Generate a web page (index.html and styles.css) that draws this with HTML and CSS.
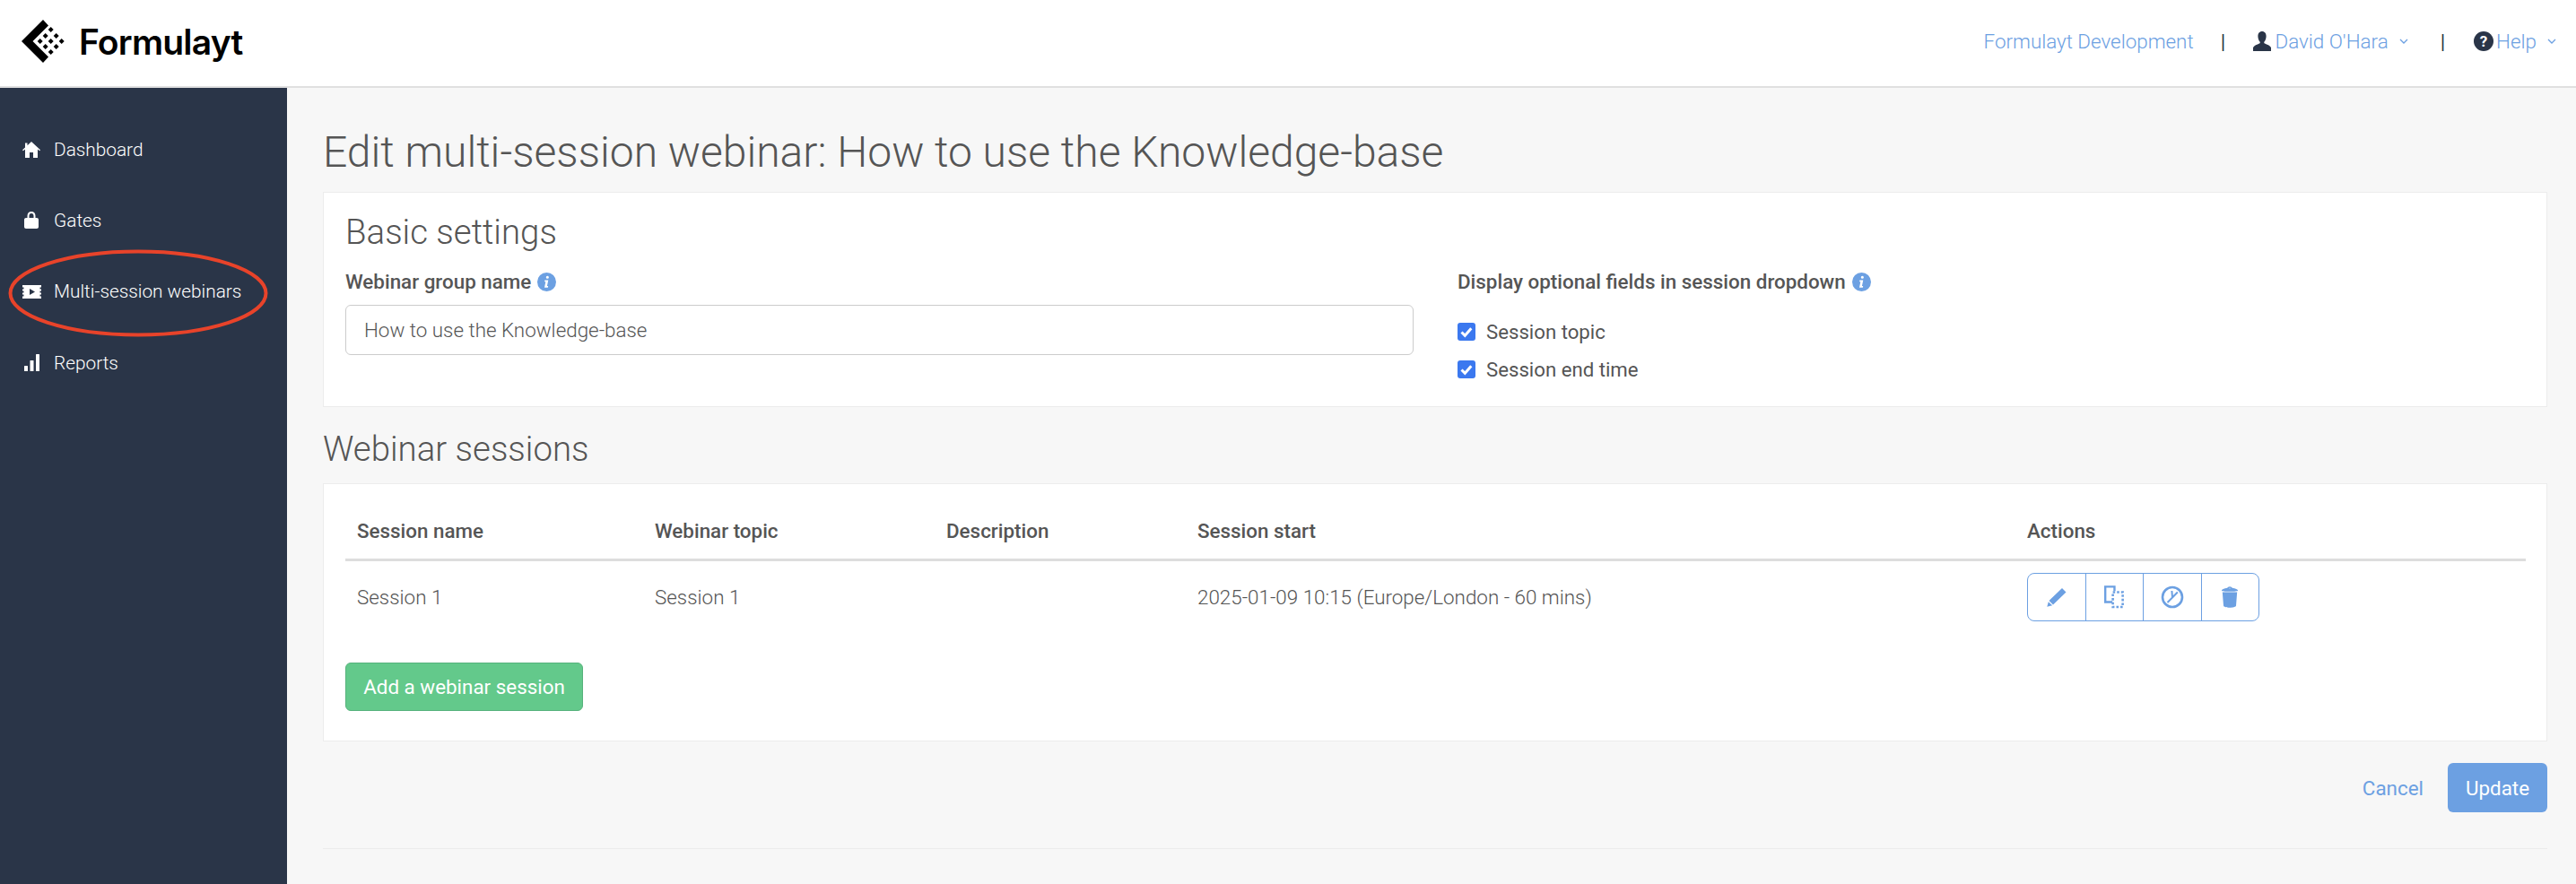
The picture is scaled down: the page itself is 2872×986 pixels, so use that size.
FILE: index.html
```html
<!DOCTYPE html>
<html lang="en">
<head>
<meta charset="utf-8">
<title>Edit multi-session webinar</title>
<link rel="stylesheet" href="styles.css">
</head>
<body>
<header class="topbar">
  <a class="brand" href="#">
    <svg class="brand-mark" viewBox="0 0 50 50" width="50" height="50" aria-hidden="true">
      <polygon fill="#000" points="0,24 24,0 30,6.500 12.500,24 30,41.500 24,48"/>
      <g fill="#000">
        <polygon points="32.700,8 35.700,11 32.700,14 29.700,11"/>
        <polygon points="26.700,15 29.700,18 26.700,21 23.700,18"/>
        <polygon points="38.700,15 41.700,18 38.700,21 35.700,18"/>
        <polygon points="20.700,21 23.700,24 20.700,27 17.700,24"/>
        <polygon points="32.700,21 35.700,24 32.700,27 29.700,24"/>
        <polygon points="44.700,21 47.700,24 44.700,27 41.700,24"/>
        <polygon points="26.700,27 29.700,30 26.700,33 23.700,30"/>
        <polygon points="38.700,27 41.700,30 38.700,33 35.700,30"/>
        <polygon points="32.700,33 35.700,36 32.700,39 29.700,36"/>
      </g>
    </svg>
    <span class="brand-name">Formulayt</span>
  </a>
  <nav class="topnav">
    <a class="toplink" href="#">Formulayt Development</a>
    <span class="sep">|</span>
    <a class="toplink with-icon" href="#">
      <svg class="user-icon" viewBox="0 0 20 22" width="20" height="22" aria-hidden="true"><path fill="#2a3548" d="M10 0c3 0 4.600 2.400 4.600 5.400 0 2.600-1 4.700-2.100 6.100-.5.700-.3 1.700.5 2.100 2.700 1.200 5.700 2.300 7 4.400V22H0v-4c1.300-2.100 4.300-3.200 7-4.400.8-.4 1-1.400.5-2.100C6.400 10.100 5.400 8 5.400 5.400 5.400 2.400 7 0 10 0z"/></svg>
      <span>David O'Hara</span>
      <svg class="chev" viewBox="0 0 10 6" width="10" height="6" aria-hidden="true"><path d="M1 1l4 4 4-4" fill="none" stroke="#6ca0e2" stroke-width="1.300"/></svg>
    </a>
    <span class="sep sep-two">|</span>
    <a class="toplink with-icon" href="#">
      <svg class="help-icon" viewBox="0 0 22 22" width="22" height="22" aria-hidden="true"><circle cx="11" cy="11" r="11" fill="#2a3548"/><text x="11" y="17" text-anchor="middle" class="help-q">?</text></svg>
      <span>Help</span>
      <svg class="chev" viewBox="0 0 10 6" width="10" height="6" aria-hidden="true"><path d="M1 1l4 4 4-4" fill="none" stroke="#6ca0e2" stroke-width="1.300"/></svg>
    </a>
  </nav>
</header>

<div class="layout">
  <aside class="sidebar">
    <a class="nav-item" href="#">
      <span class="nav-icon"><svg viewBox="0 0 20 18" width="20" height="18" aria-hidden="true"><path fill="#fff" d="M10 0l10 9.200-.9 1L17 8.400V18h-5v-6H8v6H3V8.400l-2.100 1.800-.9-1L3 6.500V1.500h2.500v2.700z"/></svg></span>
      Dashboard
    </a>
    <a class="nav-item" href="#">
      <span class="nav-icon"><svg viewBox="0 0 16 19" width="16" height="19" aria-hidden="true"><path fill="#fff" d="M8 0c2.800 0 4.500 2 4.500 4.700V7H14c1.100 0 2 .9 2 2v8c0 1.100-.9 2-2 2H2c-1.100 0-2-.9-2-2V9c0-1.100.9-2 2-2h1.500V4.700C3.500 2 5.200 0 8 0zm0 2C6.300 2 5.500 3.200 5.500 4.700V7h5V4.700C10.500 3.200 9.700 2 8 2z"/></svg></span>
      Gates
    </a>
    <a class="nav-item" href="#">
      <span class="nav-icon"><svg viewBox="0 0 21 15" width="21" height="15" aria-hidden="true"><path fill="#fff" fill-rule="evenodd" d="M0 0h21v2.500h-1.500v2H21v2h-1.500v2H21v2h-1.500v2H21V15H0v-2.500h1.500v-2H0v-2h1.500v-2H0v-2h1.500v-2H0zM8 4v7l6-3.500z"/></svg></span>
      Multi-session webinars
    </a>
    <a class="nav-item" href="#">
      <span class="nav-icon"><svg viewBox="0 0 17 19" width="17" height="19" aria-hidden="true"><g fill="#fff"><rect x="0" y="13" width="4" height="6" rx=".5"/><rect x="6.500" y="7" width="4" height="12" rx=".5"/><rect x="13" y="0" width="4" height="19" rx=".5"/></g></svg></span>
      Reports
    </a>
    <svg class="highlight" viewBox="0 0 290 98" width="290" height="98" aria-hidden="true"><ellipse cx="145" cy="49" rx="142.500" ry="46.500" fill="none" stroke="#e8432a" stroke-width="4"/></svg>
  </aside>

  <main class="main">
    <h1 class="page-title">Edit multi-session webinar: How to use the Knowledge-base</h1>

    <section class="card card-basic">
      <h2 class="card-title">Basic settings</h2>
      <div class="form-cols">
        <div class="col-left">
          <label class="field-label">Webinar group name <svg class="info" viewBox="0 0 20 20" width="21" height="21" aria-hidden="true"><circle cx="10" cy="10" r="10" fill="#6ca0e2"/><path fill="#fff" d="M10.800 3.500a1.500 1.500 0 1 1 0 3 1.500 1.500 0 0 1 0-3zM8 8h3.700l-1.300 6.200h1.200l-.3 1.800H7.600l1.300-6.200H7.700z"/></svg></label>
          <div class="text-input">How to use the Knowledge-base</div>
        </div>
        <div class="col-right">
          <label class="field-label">Display optional fields in session dropdown <svg class="info" viewBox="0 0 20 20" width="21" height="21" aria-hidden="true"><circle cx="10" cy="10" r="10" fill="#6ca0e2"/><path fill="#fff" d="M10.800 3.500a1.500 1.500 0 1 1 0 3 1.500 1.500 0 0 1 0-3zM8 8h3.700l-1.300 6.200h1.200l-.3 1.800H7.600l1.300-6.200H7.700z"/></svg></label>
          <div class="check-row first"><span class="checkbox"><svg viewBox="0 0 20 20" width="20" height="20" aria-hidden="true"><path d="M4.500 10.500l3.800 3.800 7-8" fill="none" stroke="#fff" stroke-width="3"/></svg></span>Session topic</div>
          <div class="check-row"><span class="checkbox"><svg viewBox="0 0 20 20" width="20" height="20" aria-hidden="true"><path d="M4.500 10.500l3.800 3.800 7-8" fill="none" stroke="#fff" stroke-width="3"/></svg></span>Session end time</div>
        </div>
      </div>
    </section>

    <h2 class="section-title">Webinar sessions</h2>

    <section class="card card-sessions">
      <table class="sessions">
        <thead>
          <tr>
            <th class="c1">Session name</th>
            <th class="c2">Webinar topic</th>
            <th class="c3">Description</th>
            <th class="c4">Session start</th>
            <th class="c5">Actions</th>
          </tr>
        </thead>
        <tbody>
          <tr>
            <td>Session 1</td>
            <td>Session 1</td>
            <td></td>
            <td>2025-01-09 10:15 (Europe/London - 60 mins)</td>
            <td>
              <div class="btn-group">
                <a class="icon-btn" href="#"><svg viewBox="0 0 24 24" width="24" height="24" aria-hidden="true"><path fill="#6ca0e2" d="M18 2l4.500 4.500L8 20.500l-4.500-4.500zM2.800 17.200l4.300 4.100-5.800 1.500z"/></svg></a>
                <a class="icon-btn" href="#"><svg viewBox="0 0 24 28" width="22" height="26" aria-hidden="true"><path fill="none" stroke="#6ca0e2" stroke-width="2.600" d="M10 20H1.300V1.300H12.500V6.500"/><path fill="none" stroke="#6ca0e2" stroke-width="2.800" stroke-dasharray="2.800 2.200" d="M10.500 8h12v18h-12z"/></svg></a>
                <a class="icon-btn" href="#"><svg viewBox="0 0 26 26" width="26" height="26" aria-hidden="true"><circle cx="13" cy="13" r="11" fill="none" stroke="#6ca0e2" stroke-width="2.600"/><path fill="none" stroke="#6ca0e2" stroke-width="2" d="M7.500 19l5.500-5.500M13 13.500L12.400 6M13 13.500L18.800 7.500"/></svg></a>
                <a class="icon-btn" href="#"><svg viewBox="0 0 22 26" width="20" height="26" aria-hidden="true"><path fill="#6ca0e2" d="M2 7h18l-1.300 16.500c-.1 1.400-3.500 2.500-7.700 2.500s-7.600-1.100-7.700-2.500zM11 0c1.400 0 2.700.8 3 1.800C18 2.500 21 3.700 21 5c0 .6-4.500 1.200-10 1.200S1 5.600 1 5c0-1.300 3-2.500 7-3.200C8.300.8 9.600 0 11 0zm0 1.600c-.7 0-1.300.3-1.500.6l3 0c-.2-.3-.8-.6-1.500-.6z"/></svg></a>
              </div>
            </td>
          </tr>
        </tbody>
      </table>
      <a class="btn btn-add" href="#">Add a webinar session</a>
    </section>

    <div class="form-actions">
      <a class="cancel" href="#">Cancel</a>
      <a class="btn btn-update" href="#">Update</a>
    </div>
    <hr class="divider">
  </main>
</div>
</body>
</html>
```

FILE: styles.css
```css
* { box-sizing: border-box; }
html, body { margin: 0; padding: 0; height: 100%; }
body {
  font-family: Roboto, "Liberation Sans", sans-serif;
  font-size: 22.400px;
  color: #555;
  background: #f7f7f7;
  overflow: hidden;
  display: flex;
  flex-direction: column;
}
a { text-decoration: none; color: inherit; }

.topbar {
  height: 98px;
  flex: none;
  background: #fff;
  border-bottom: 2px solid #e0e0e0;
  display: flex;
  align-items: flex-start;
  justify-content: space-between;
  padding-left: 24px;
}
.brand { display: flex; align-items: center; margin-top: 22px; }
.brand-mark { display: block; }
.brand-name {
  font-family: Inter, "Liberation Sans", sans-serif;
  font-weight: 600;
  font-size: 39px;
  line-height: 48px;
  letter-spacing: -0.8px;
  color: #000;
  margin-left: 14px;
}
.topnav {
  display: flex;
  align-items: center;
  height: 92px;
  padding-right: 22px;
  font-weight: 300;
  color: #6ca0e2;
}
.toplink { display: flex; align-items: center; color: #6ca0e2; }
.with-icon .user-icon { margin-right: 4px; }
.with-icon .help-icon { margin-right: 3.500px; }
.help-q { font: 700 17px Roboto, sans-serif; fill: #fff; }
.chev { margin-left: 12px; }
.sep { color: #2a3548; margin: 0 31.400px 0 30px; font-weight: 400; }
.sep-two { margin: 0 31.500px 0 36px; }

.layout { flex: 1; display: flex; min-height: 0; }
.sidebar {
  width: 320px;
  flex: none;
  background: #2a3548;
  padding-top: 29px;
  position: relative;
}
.nav-item {
  display: flex;
  align-items: center;
  height: 79.300px;
  padding-left: 24px;
  color: #fff;
  font-weight: 300;
  font-size: 20.800px;
}
.nav-icon {
  width: 22px;
  margin-right: 14px;
  display: flex;
  justify-content: center;
}
.nav-icon svg { display: block; }
.highlight { position: absolute; left: 9px; top: 180px; }

.main { flex: 1; padding: 0 32px 0 40px; min-width: 0; }
.page-title {
  font-weight: 300;
  font-size: 48px;
  line-height: 56px;
  margin: 44px 0 16px;
  color: #555;
}
.card {
  background: #fff;
  border: 1px solid #ececec;
}
.card-basic { height: 240px; padding: 22px 24px 0; }
.card-title, .section-title {
  font-weight: 300;
  font-size: 38.400px;
  line-height: 44px;
  margin: 0;
  color: #555;
}
.form-cols { display: flex; gap: 49px; margin-top: 19px; }
.col-left { width: 1191px; flex: none; }
.col-right { flex: 1; }
.field-label {
  display: flex;
  align-items: center;
  gap: 7px;
  font-weight: 500;
  line-height: 28px;
  color: #555;
}
.text-input {
  margin-top: 12px;
  height: 56px;
  border: 1px solid #ccc;
  border-radius: 6px;
  padding: 0 20px;
  display: flex;
  align-items: center;
  font-weight: 300;
  background: #fff;
}
.check-row {
  display: flex;
  align-items: center;
  height: 42px;
  color: #555;
  font-size: 22.200px;
}
.check-row.first { margin-top: 21px; }
.checkbox {
  width: 20px;
  height: 20px;
  border-radius: 3px;
  background: #3b78ef;
  margin-right: 12px;
  flex: none;
}
.checkbox svg { display: block; }
.section-title { margin: 25px 0 16px; }
.card-sessions { height: 288px; padding: 22px 24px 0; }
.sessions { width: 2431px; border-collapse: collapse; table-layout: fixed; }
.sessions th {
  text-align: left;
  font-weight: 500;
  height: 62px;
  padding: 0 0 0 13px;
  border-bottom: 3px solid #ddd;
}
.sessions td { height: 82px; padding: 0 0 0 13px; font-weight: 300; font-size: 22.400px; }
.c1 { width: 332px; }
.c2 { width: 325px; }
.c3 { width: 280px; }
.c4 { width: 925px; }
.btn-group {
  display: flex;
  width: 259px;
  height: 54px;
  border: 1px solid #6ca0e2;
  border-radius: 8px;
  background: #fff;
}
.icon-btn {
  flex: 1;
  display: flex;
  align-items: center;
  justify-content: center;
  border-right: 1.500px solid #6ca0e2;
}
.icon-btn:last-child { border-right: 0; }
.icon-btn svg { display: block; }
.btn {
  display: inline-flex;
  align-items: center;
  justify-content: center;
  border-radius: 6px;
  color: #fff;
}
.btn-add {
  width: 265px;
  height: 54px;
  margin-top: 33px;
  background: #63c98b;
  border: 1px solid #56b27c;
}
.form-actions {
  display: flex;
  justify-content: flex-end;
  align-items: center;
  margin-top: 24px;
}
.cancel { color: #6ca0e2; margin-right: 27px; }
.btn-update { width: 111px; height: 55px; background: #6ca0e2; }
.divider { border: 0; border-top: 1px solid #ececec; margin: 40px 0 0; }
```
